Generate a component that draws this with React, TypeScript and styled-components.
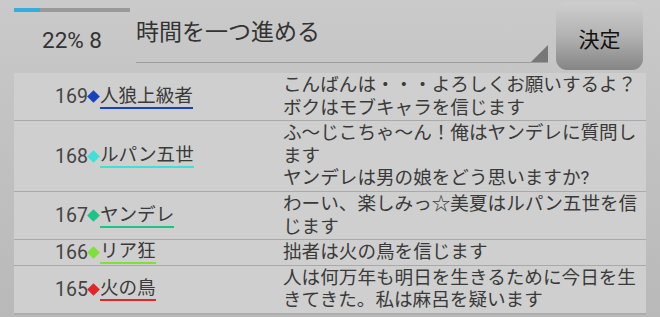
import React from 'react';
import styled, { createGlobalStyle } from 'styled-components';

const GlobalStyle = createGlobalStyle`
  html, body {
    margin: 0;
    padding: 0;
  }
  body {
    background: linear-gradient(180deg, #cacaca 0%, #c2c2c2 40%, #b9b9b9 100%);
    font-family: Roboto, "Noto Sans CJK JP", sans-serif;
    color: #3a3a3a;
  }
`;

const Page = styled.div`
  width: 660px;
  height: 317px;
  overflow: hidden;
  display: flex;
  flex-direction: column;
`;

const Header = styled.div`
  height: 73px;
  display: flex;
  padding-left: 14px;
  box-sizing: border-box;
`;

const StatusBlock = styled.div`
  width: 116px;
  display: flex;
  flex-direction: column;
  align-items: center;
  padding-top: 8px;
`;

const Progress = styled.div`
  width: 100%;
  height: 4px;
  background: #9a9a9a;
`;

const ProgressFill = styled.div`
  height: 100%;
  background: #38ace0;
`;

const StatusText = styled.div`
  margin-top: 14px;
  font-size: 22.5px;
  line-height: 28px;
  color: #333;
`;

const InputBox = styled.div`
  margin-left: 6px;
  width: 412px;
  height: 63px;
  box-sizing: border-box;
  border-bottom: 1px solid #9c9c9c;
  position: relative;
  padding-top: 19px;
  font-size: 23px;
  line-height: 28px;
  color: #333;
`;

const Corner = styled.div`
  position: absolute;
  right: 0;
  bottom: 0;
  width: 0;
  height: 0;
  border-left: 17px solid transparent;
  border-bottom: 17px solid #777;
`;

const DecideButton = styled.button`
  margin: 2px 0 0 8px;
  width: 87px;
  height: 68px;
  border: none;
  border-radius: 11px;
  background: linear-gradient(180deg, #cecece 0%, #b2b2b2 50%, #858585 100%);
  font-family: Roboto, "Noto Sans CJK JP", sans-serif;
  font-size: 21px;
  color: #111;
  padding: 0;
  padding-top: 3px;
`;

const Table = styled.div`
  margin-left: 14px;
  width: 632px;
  border-bottom: 2px solid #adadad;
`;

const Row = styled.div`
  display: grid;
  grid-template-columns: 269px 363px;
  background: #cfcfcf;
  border-bottom: 1px solid #a9a9a9;
  &:last-child {
    border-bottom: none;
  }
`;

const NameCell = styled.div`
  display: flex;
  align-items: center;
  padding-left: 41px;
  font-size: 18.6px;
`;

const Num = styled.span`
  font-size: 19.5px;
  color: #444;
`;

const Diamond = styled.span<{ $color: string }>`
  width: 9px;
  height: 9px;
  margin: 0 1.5px;
  background: ${p => p.$color};
  transform: rotate(45deg);
`;

const Name = styled.span<{ $color: string }>`
  line-height: 22px;
  border-bottom: 2px solid ${p => p.$color};
  color: #3a3a3a;
`;

const Message = styled.div`
  width: 360px;
  padding: 1px 0;
  font-size: 18.6px;
  line-height: 22.6px;
  line-break: anywhere;
  color: #3a3a3a;
`;

const talks = [
  { no: 169, name: '人狼上級者', color: '#1741bd', text: 'こんばんは・・・よろしくお願いするよ？ボクはモブキャラを信じます' },
  { no: 168, name: 'ルパン五世', color: '#3fe0dc', text: 'ふ〜じこちゃ〜ん！俺はヤンデレに質問します\nヤンデレは男の娘をどう思いますか?' },
  { no: 167, name: 'ヤンデレ', color: '#1dc487', text: 'わーい、楽しみっ☆美夏はルパン五世を信じます' },
  { no: 166, name: 'リア狂', color: '#7fe03c', text: '拙者は火の鳥を信じます' },
  { no: 165, name: '火の鳥', color: '#e0262a', text: '人は何万年も明日を生きるために今日を生きてきた。私は麻呂を疑います' },
];

export default function App() {
  const progress = 22;
  return (
    <>
      <GlobalStyle />
      <Page>
        <Header>
          <StatusBlock>
            <Progress>
              <ProgressFill style={{ width: `${progress}%` }} />
            </Progress>
            <StatusText>{progress}% 8</StatusText>
          </StatusBlock>
          <InputBox>
            時間を一つ進める
            <Corner />
          </InputBox>
          <DecideButton>決定</DecideButton>
        </Header>
        <Table>
          {talks.map(t => (
            <Row key={t.no}>
              <NameCell>
                <Num>{t.no}</Num>
                <Diamond $color={t.color} />
                <Name $color={t.color}>{t.name}</Name>
              </NameCell>
              <Message>
                {t.text.split('\n').map((line, i) => (
                  <React.Fragment key={i}>
                    {i > 0 && <br />}
                    {line}
                  </React.Fragment>
                ))}
              </Message>
            </Row>
          ))}
        </Table>
      </Page>
    </>
  );
}
